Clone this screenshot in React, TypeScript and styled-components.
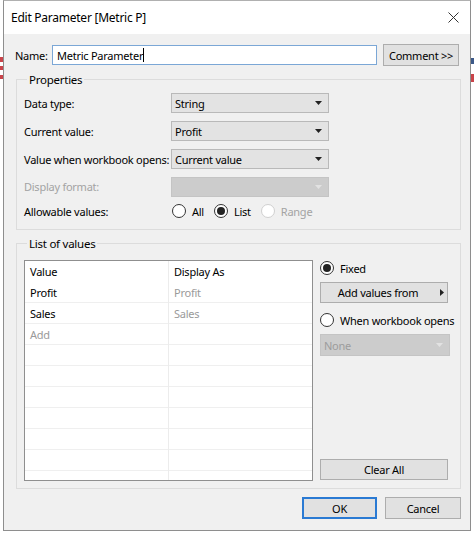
import React from "react";
import styled, { createGlobalStyle } from "styled-components";

const GlobalStyle = createGlobalStyle`
  html, body {
    margin: 0;
    padding: 0;
  }
  body {
    font-family: "Noto Sans", "Open Sans", sans-serif;
    font-size: 11px;
    letter-spacing: -0.25px;
    color: #000;
    white-space: nowrap;
    background:
      linear-gradient(#c9444a, #c9444a) 0 57px / 3px 5px no-repeat,
      linear-gradient(#c9444a, #c9444a) 0 66px / 3px 4px no-repeat,
      linear-gradient(#c9444a, #c9444a) 0 75px / 3px 4px no-repeat,
      linear-gradient(#3d5a89, #3d5a89) 470px 58px / 4px 6px no-repeat,
      linear-gradient(#c9444a, #c9444a) 470px 74px / 4px 8px no-repeat,
      #ffffff;
  }
`;

const Window = styled.div`
  box-sizing: border-box;
  width: 468px;
  height: 531px;
  margin-left: 3px;
  border: 1px solid #8e8e8e;
  border-top-color: #b0b0b0;
  background: #f0f0f0;
  display: flex;
  flex-direction: column;
`;

const TitleBar = styled.div`
  height: 33px;
  flex: none;
  background: #ffffff;
  display: flex;
  align-items: center;
  justify-content: space-between;
  padding: 0 11px 0 7px;
  font-size: 12px;
`;

const CloseIcon = () => (
  <svg width="11" height="11" viewBox="0 0 11 11">
    <path d="M0.5 0.5 L10.5 10.5 M10.5 0.5 L0.5 10.5" stroke="#333" strokeWidth="1" />
  </svg>
);

const Content = styled.div`
  flex: 1;
  display: flex;
  flex-direction: column;
  padding: 10px 9px 0 11px;
`;

const NameRow = styled.div`
  display: flex;
  align-items: center;
  height: 22px;
`;

const NameLabel = styled.span`
  width: 37px;
`;

const NameInput = styled.div`
  box-sizing: border-box;
  width: 325px;
  height: 20px;
  border: 1px solid #7ba7d6;
  background: #fff;
  display: flex;
  align-items: center;
  padding-left: 4px;
`;

const Caret = styled.span`
  display: inline-block;
  width: 1px;
  height: 14px;
  background: #000;
`;

const Button = styled.div<{ $width: number; $primary?: boolean }>`
  box-sizing: border-box;
  width: ${(p) => p.$width}px;
  height: 22px;
  border: 1px solid ${(p) => (p.$primary ? "#2a7ad3" : "#adadad")};
  box-shadow: ${(p) => (p.$primary ? "inset 0 0 0 1px #2a7ad3" : "none")};
  background: #e1e1e1;
  display: flex;
  align-items: center;
  justify-content: center;
  gap: 22px;
`;

const Group = styled.fieldset`
  margin: 0 0 0 1px;
  border: 1px solid #dcdcdc;
  padding: 6px 7px 11px 7px;
  min-width: 0;
`;

const Legend = styled.legend`
  padding: 0 2px;
  margin-left: 3px;
  font-size: 11.5px;
`;

const PropsGrid = styled.div`
  display: grid;
  grid-template-columns: 147px 158px;
  grid-template-rows: 20px 20px 20px 19px 14px;
  row-gap: 8px;
  align-items: center;
`;

const Label = styled.span<{ $disabled?: boolean }>`
  color: ${(p) => (p.$disabled ? "#a3a3a3" : "#000")};
`;

const Select = styled.div<{ $disabled?: boolean; $height?: number }>`
  box-sizing: border-box;
  height: ${(p) => p.$height ?? 20}px;
  border: 1px solid ${(p) => (p.$disabled ? "#c4c4c4" : "#b9b9b9")};
  background: ${(p) => (p.$disabled ? "#cccccc" : "#e3e3e3")};
  color: ${(p) => (p.$disabled ? "#9c9c9c" : "#000")};
  display: flex;
  align-items: center;
  justify-content: space-between;
  padding: 0 6px 0 3px;
`;

const Arrow = ({ color }: { color: string }) => (
  <svg width="7" height="4" viewBox="0 0 7 4">
    <path d="M0 0 H7 L3.5 4 Z" fill={color} />
  </svg>
);

const RadioRow = styled.div`
  display: flex;
  align-items: center;
  gap: 10px;
  margin-left: 1px;
`;

const RadioItem = styled.label<{ $disabled?: boolean }>`
  display: flex;
  align-items: center;
  gap: 6px;
  color: ${(p) => (p.$disabled ? "#a3a3a3" : "#000")};
`;

const RadioCircle = styled.span<{ $checked?: boolean; $disabled?: boolean }>`
  box-sizing: border-box;
  width: 14px;
  height: 14px;
  border-radius: 50%;
  border: 1px solid ${(p) => (p.$disabled ? "#d0d0d0" : "#333")};
  background: #fff;
  display: flex;
  align-items: center;
  justify-content: center;
  &::after {
    content: "";
    width: 8px;
    height: 8px;
    border-radius: 50%;
    background: ${(p) => (p.$checked ? "#222" : "transparent")};
  }
`;

const Radio = ({
  label,
  checked,
  disabled,
}: {
  label: string;
  checked?: boolean;
  disabled?: boolean;
}) => (
  <RadioItem $disabled={disabled}>
    <RadioCircle $checked={checked} $disabled={disabled} />
    {label}
  </RadioItem>
);

const ListGroup = styled(Group)`
  margin-top: 6px;
  padding: 9px 7px 7px 7px;
`;

const ListBody = styled.div`
  display: flex;
  gap: 7px;
`;

const Table = styled.div`
  box-sizing: border-box;
  width: 289px;
  height: 221px;
  border: 1px solid #8f8f8f;
  background: #fff;
  overflow: hidden;
  position: relative;
  display: flex;
  flex-direction: column;
`;

const Divider = styled.div`
  position: absolute;
  top: 0;
  bottom: 0;
  left: 143px;
  width: 1px;
  background: #ececec;
`;

const Row = styled.div<{ $header?: boolean }>`
  flex: none;
  height: 21px;
  box-sizing: border-box;
  display: grid;
  grid-template-columns: 143px 1fr;
  align-items: center;
  border-bottom: 1px solid ${(p) => (p.$header ? "transparent" : "#efefef")};
`;

const Cell = styled.span<{ $muted?: boolean; $first?: boolean }>`
  padding-left: ${(p) => (p.$first ? 5 : 6)}px;
  color: ${(p) => (p.$muted ? "#9a9a9a" : "#000")};
`;

const Side = styled.div`
  width: 130px;
  display: flex;
  flex-direction: column;
  padding-bottom: 1px;
`;

const SideRadio = styled.div`
  height: 16px;
  display: flex;
  align-items: center;
`;

const SideButton = styled(Button)`
  height: 21px;
`;

const Spacer = styled.div`
  flex: 1;
`;

const Footer = styled.div`
  display: flex;
  justify-content: flex-end;
  gap: 8px;
  padding: 8px 0 0 0;
`;

const tableRows: [string, string][] = [
  ["Profit", "Profit"],
  ["Sales", "Sales"],
];

export default function App() {
  return (
    <>
      <GlobalStyle />
      <Window>
        <TitleBar>
          <span>Edit Parameter [Metric P]</span>
          <CloseIcon />
        </TitleBar>
        <Content>
          <NameRow>
            <NameLabel>Name:</NameLabel>
            <NameInput>
              Metric Parameter
              <Caret />
            </NameInput>
            <Button $width={76} style={{ marginLeft: 6 }}>
              Comment &gt;&gt;
            </Button>
          </NameRow>

          <Group style={{ marginTop: 6 }}>
            <Legend>Properties</Legend>
            <PropsGrid>
              <Label>Data type:</Label>
              <Select>
                String
                <Arrow color="#222" />
              </Select>
              <Label>Current value:</Label>
              <Select>
                Profit
                <Arrow color="#222" />
              </Select>
              <Label>Value when workbook opens:</Label>
              <Select>
                Current value
                <Arrow color="#222" />
              </Select>
              <Label $disabled>Display format:</Label>
              <Select $disabled>
                <span />
                <Arrow color="#e2e2e2" />
              </Select>
              <Label>Allowable values:</Label>
              <RadioRow>
                <Radio label="All" />
                <Radio label="List" checked />
                <Radio label="Range" disabled />
              </RadioRow>
            </PropsGrid>
          </Group>

          <ListGroup>
            <Legend>List of values</Legend>
            <ListBody>
              <Table>
                <Divider />
                <Row $header>
                  <Cell $first>Value</Cell>
                  <Cell>Display As</Cell>
                </Row>
                {tableRows.map(([v, d]) => (
                  <Row key={v}>
                    <Cell $first>{v}</Cell>
                    <Cell $muted>{d}</Cell>
                  </Row>
                ))}
                <Row>
                  <Cell $first $muted>
                    Add
                  </Cell>
                  <Cell />
                </Row>
                {Array.from({ length: 7 }).map((_, i) => (
                  <Row key={i}>
                    <Cell />
                    <Cell />
                  </Row>
                ))}
              </Table>
              <Side>
                <SideRadio>
                  <Radio label="Fixed" checked />
                </SideRadio>
                <SideButton $width={128} style={{ marginTop: 6 }}>
                  <span style={{ marginLeft: 14 }}>Add values from</span>
                  <svg width="4" height="7" viewBox="0 0 4 7">
                    <path d="M0 0 L4 3.5 L0 7 Z" fill="#222" />
                  </svg>
                </SideButton>
                <SideRadio style={{ marginTop: 9 }}>
                  <Radio label="When workbook opens" />
                </SideRadio>
                <Select $disabled $height={22} style={{ marginTop: 6, width: 130 }}>
                  None
                  <Arrow color="#e2e2e2" />
                </Select>
                <Spacer />
                <SideButton $width={128}>Clear All</SideButton>
              </Side>
            </ListBody>
          </ListGroup>

          <Footer>
            <Button $width={75} $primary>
              OK
            </Button>
            <Button $width={76}>Cancel</Button>
          </Footer>
        </Content>
      </Window>
    </>
  );
}
